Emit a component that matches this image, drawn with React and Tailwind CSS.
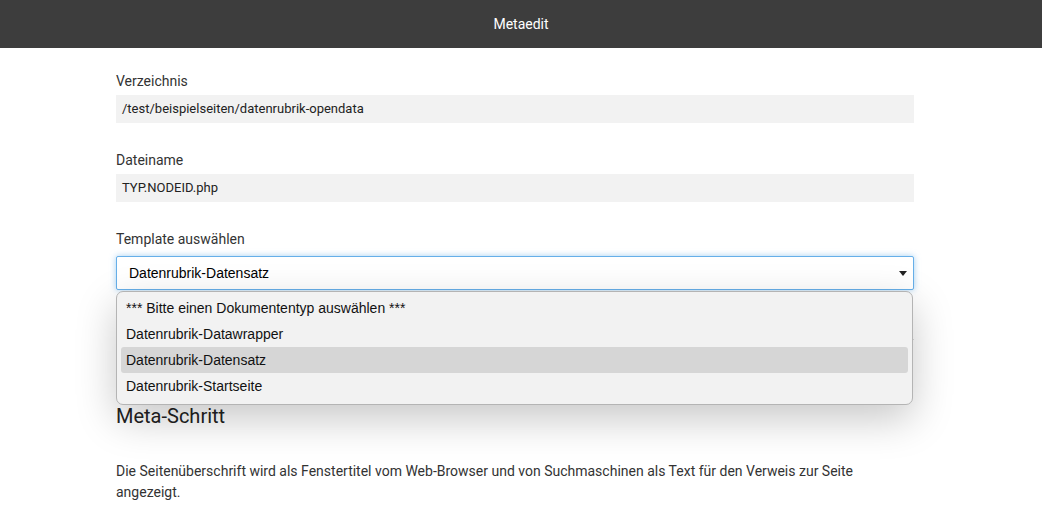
import React from "react";

const options = [
  "*** Bitte einen Dokumententyp auswählen ***",
  "Datenrubrik-Datawrapper",
  "Datenrubrik-Datensatz",
  "Datenrubrik-Startseite",
];

const Field = ({ label, value }) => (
  <div className="flex flex-col gap-1">
    <label className="text-sm leading-5 text-[#333]">{label}</label>
    <div className="h-[28px] bg-[#f2f2f2] pl-[6px] flex items-center text-[13px] text-[#222]">
      {value}
    </div>
  </div>
);

export default function App() {
  const selected = "Datenrubrik-Datensatz";

  return (
    <div className="min-h-[524px] bg-white font-['Roboto',sans-serif]">
      <header className="h-12 bg-[#3d3d3d] flex items-center justify-center">
        <span className="text-white text-sm font-normal">Metaedit</span>
      </header>

      <main className="ml-[116px] w-[798px] pt-[23px]">
        <Field label="Verzeichnis" value="/test/beispielseiten/datenrubrik-opendata" />
        <div className="h-[27px]" />
        <Field label="Dateiname" value="TYP.NODEID.php" />
        <div className="h-[27px]" />

        <div className="flex flex-col gap-[7px]">
          <label className="text-sm leading-5 text-[#333]">Template auswählen</label>
          <div className="relative">
            <div className="h-[34px] border border-[#66afe9] shadow-[0_0_6px_rgba(102,175,233,0.6)] rounded-[2px] bg-white flex items-center justify-between pl-3 pr-[6px] font-['Liberation_Sans',Arial,sans-serif] text-sm text-black">
              <span>{selected}</span>
              <svg width="8" height="5" viewBox="0 0 8 5">
                <path d="M0 0h8L4 5z" fill="#222" />
              </svg>
            </div>

            <div className="absolute left-0 top-[35px] w-[797px] z-10 bg-[#f2f2f2] border border-[#b4b4b4] rounded-[7px] px-1 pt-[3px] pb-[5px] shadow-[0_14px_40px_rgba(0,0,0,0.22)] font-['Liberation_Sans',Arial,sans-serif] text-sm text-[#111]">
              {options.map((o) => (
                <div
                  key={o}
                  className={`h-[26px] flex items-center px-[5px] rounded-[3px] ${
                    o === selected ? "bg-[#d6d6d6]" : ""
                  }`}
                >
                  {o}
                </div>
              ))}
            </div>
          </div>
        </div>

        <hr className="mt-[49px] border-[#ddd]" />

        <h2 className="mt-[62px] text-xl leading-7 text-[#222]">Meta-Schritt</h2>

        <p className="mt-[31px] text-sm leading-[21px] text-[#333]">
          Die Seitenüberschrift wird als Fenstertitel vom Web-Browser und von Suchmaschinen als
          Text für den Verweis zur Seite angezeigt.
        </p>
      </main>
    </div>
  );
}
